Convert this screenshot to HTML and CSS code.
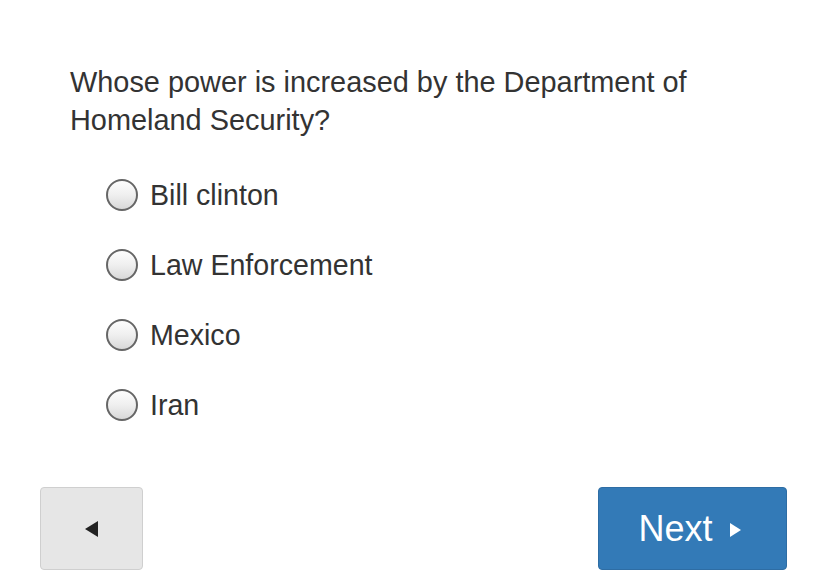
FILE: index.html
```html
<!DOCTYPE html>
<html>
<head>
<meta charset="utf-8">
<link rel="stylesheet" href="styles.css">
</head>
<body>
<div class="page">
  <div class="question">Whose power is increased by the Department of Homeland Security?</div>
  <ul class="options">
    <li class="option"><span class="radio"></span><span class="label">Bill clinton</span></li>
    <li class="option"><span class="radio"></span><span class="label">Law Enforcement</span></li>
    <li class="option"><span class="radio"></span><span class="label">Mexico</span></li>
    <li class="option"><span class="radio"></span><span class="label">Iran</span></li>
  </ul>
  <div class="nav">
    <button class="btn btn-back"><span class="tri-left"></span></button>
    <button class="btn btn-next">Next<span class="tri-right"></span></button>
  </div>
</div>
</body>
</html>
```
FILE: styles.css
```css
html, body {
  margin: 0;
  padding: 0;
  background: #fff;
}
.page {
  width: 828px;
  height: 584px;
  box-sizing: border-box;
  padding-top: 63px;
  font-family: "Liberation Sans", Arial, sans-serif;
  color: #333;
}
.question {
  margin-left: 70px;
  width: 700px;
  font-size: 28.9px;
  line-height: 38px;
}
.options {
  list-style: none;
  margin: 21px 0 0 106px;
  padding: 0;
}
.option {
  height: 70px;
  display: flex;
  align-items: center;
}
.radio {
  width: 28px;
  height: 28px;
  border: 2px solid #666;
  border-radius: 50%;
  background: linear-gradient(180deg, #fdfdfd 0%, #efefef 50%, #d8d8d8 100%);
  flex: none;
}
.label {
  margin-left: 12px;
  font-size: 28.6px;
  color: #333;
}
.nav {
  display: flex;
  justify-content: space-between;
  margin: 47px 41px 0 40px;
}
.btn {
  height: 83px;
  border-radius: 4px;
  font-family: "Liberation Sans", Arial, sans-serif;
  display: flex;
  align-items: center;
  justify-content: center;
  padding: 0;
  cursor: pointer;
}
.btn-back {
  width: 103px;
  background: #e6e6e6;
  border: 1px solid #cfcfcf;
}
.btn-next {
  width: 189px;
  background: #337ab7;
  border: 1px solid #2e6da4;
  color: #fff;
  font-size: 36px;
  gap: 17px;
  padding-right: 6px;
}
.tri-left {
  width: 0;
  height: 0;
  border-top: 8px solid transparent;
  border-bottom: 8px solid transparent;
  border-right: 13px solid #222;
}
.tri-right {
  width: 0;
  height: 0;
  border-top: 7px solid transparent;
  border-bottom: 7px solid transparent;
  border-left: 11px solid #fff;
  margin-top: 2px;
}
```
